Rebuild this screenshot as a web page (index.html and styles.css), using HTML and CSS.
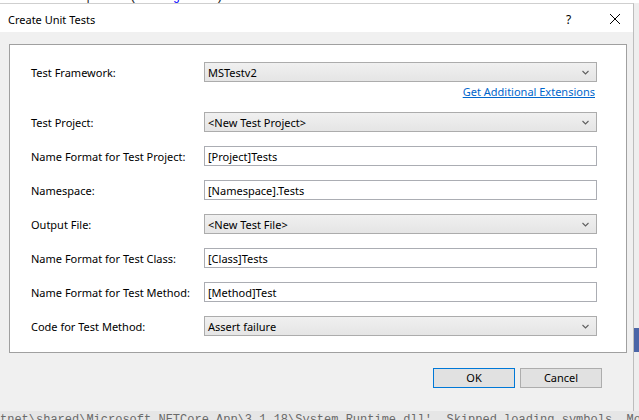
FILE: index.html
```html
<!DOCTYPE html>
<html>
<head>
<meta charset="utf-8">
<link rel="stylesheet" href="styles.css">
</head>
<body>
<div class="desktop">
  <div class="code code-top"><span class="b">*</span><span class="k"> ConsoleOutputFor(</span><span class="b">string</span><span class="k"> name)</span></div>
  <div class="code code-bottom">tnet\shared\Microsoft.NETCore.App\3.1.18\System.Runtime.dll'. Skipped loading symbols. Module</div>
  <div class="side-strip"><div class="side-blue"></div></div>

  <div class="dialog">
    <div class="titlebar">
      <span class="title">Create Unit Tests</span>
      <span class="help">?</span>
      <svg class="close" width="12" height="12" viewBox="0 0 12 12"><path d="M1 1 L11 11 M11 1 L1 11" stroke="#000" stroke-width="1" fill="none"/></svg>
    </div>
    <div class="body">
      <div class="panel">
        <div class="row first">
          <span class="label">Test Framework:</span>
          <div class="select"><span>MSTestv2</span><svg class="chev" width="7" height="5" viewBox="0 0 7 5"><path d="M0.5 1 L3.5 4 L6.5 1" stroke="#606060" stroke-width="1.1" fill="none"/></svg></div>
        </div>
        <div class="linkrow"><a class="link">Get Additional Extensions</a></div>
        <div class="row after-link">
          <span class="label">Test Project:</span>
          <div class="select"><span>&lt;New Test Project&gt;</span><svg class="chev" width="7" height="5" viewBox="0 0 7 5"><path d="M0.5 1 L3.5 4 L6.5 1" stroke="#606060" stroke-width="1.1" fill="none"/></svg></div>
        </div>
        <div class="row">
          <span class="label">Name Format for Test Project:</span>
          <div class="textbox">[Project]Tests</div>
        </div>
        <div class="row">
          <span class="label">Namespace:</span>
          <div class="textbox">[Namespace].Tests</div>
        </div>
        <div class="row">
          <span class="label">Output File:</span>
          <div class="select"><span>&lt;New Test File&gt;</span><svg class="chev" width="7" height="5" viewBox="0 0 7 5"><path d="M0.5 1 L3.5 4 L6.5 1" stroke="#606060" stroke-width="1.1" fill="none"/></svg></div>
        </div>
        <div class="row">
          <span class="label">Name Format for Test Class:</span>
          <div class="textbox">[Class]Tests</div>
        </div>
        <div class="row">
          <span class="label">Name Format for Test Method:</span>
          <div class="textbox">[Method]Test</div>
        </div>
        <div class="row">
          <span class="label">Code for Test Method:</span>
          <div class="select"><span>Assert failure</span><svg class="chev" width="7" height="5" viewBox="0 0 7 5"><path d="M0.5 1 L3.5 4 L6.5 1" stroke="#606060" stroke-width="1.1" fill="none"/></svg></div>
        </div>
      </div>
      <div class="buttons">
        <button class="btn default">OK</button>
        <button class="btn">Cancel</button>
      </div>
    </div>
  </div>
</div>
</body>
</html>
```
FILE: styles.css
```css
html, body {
  margin: 0;
  padding: 0;
  background: #ffffff;
}
.desktop {
  position: relative;
  width: 639px;
  height: 420px;
  overflow: hidden;
  background: #ffffff;
  font-family: "Noto Sans", "Open Sans", sans-serif;
}
.code {
  position: absolute;
  left: 0;
  font-family: "Liberation Mono", monospace;
  font-size: 12px;
  line-height: 14px;
  white-space: pre;
}
.code-top {
  top: -10px;
  color: #1e1e1e;
}
.code-top .b { color: #0000ff; }
.code-bottom {
  top: 411px;
  width: 639px;
  height: 14px;
  background: #e6e6e6;
  color: #6a6a6a;
  padding-top: 2px;
}
.side-strip {
  position: absolute;
  left: 634px;
  top: 3px;
  width: 5px;
  height: 408px;
  background: #eeeeee;
}
.side-blue {
  margin-top: 325px;
  height: 24px;
  background: #4b66a8;
}
.dialog {
  position: absolute;
  left: 0;
  top: 3px;
  width: 633px;
  height: 407px;
  border-top: 1px solid #cfcfcf;
  border-right: 1px solid #bdbdbd;
  background: #f0f0f0;
  display: flex;
  flex-direction: column;
}
.titlebar {
  height: 28px;
  background: #ffffff;
  display: flex;
  align-items: center;
  position: relative;
  font-size: 11px;
  color: #000;
}
.title {
  margin-left: 8px;
  margin-top: 2px;
}
.help {
  position: absolute;
  left: 566px;
  top: 7px;
  font-size: 12px;
}
.close {
  position: absolute;
  left: 609px;
  top: 9px;
}
.body {
  flex: 1;
  padding: 12px 6px 0 9px;
  display: flex;
  flex-direction: column;
}
.panel {
  background: #ffffff;
  border: 1px solid #a0a0a0;
  height: 307px;
  padding: 0 29px 0 21px;
  display: flex;
  flex-direction: column;
}
.row {
  display: flex;
  align-items: center;
  height: 20px;
  margin-top: 14px;
  font-size: 11px;
  color: #000;
}
.row.first { margin-top: 17px; }
.row.after-link { margin-top: 12px; }
.label {
  width: 173px;
  flex: none;
  white-space: nowrap;
}
.select, .textbox {
  flex: 1;
  height: 20px;
  box-sizing: border-box;
  display: flex;
  align-items: center;
  padding-left: 3px;
  font-size: 11px;
}
.select {
  border: 1px solid #acacac;
  background: linear-gradient(#f0f0f0, #e5e5e5);
  justify-content: space-between;
}
.chev {
  margin-right: 7px;
}
.textbox {
  border: 1px solid #abadb3;
  background: #ffffff;
}
.linkrow {
  display: flex;
  justify-content: flex-end;
  height: 16px;
  margin-top: 2px;
  padding-right: 2px;
  font-size: 11px;
  line-height: 16px;
}
.link {
  color: #0066cc;
  text-decoration: underline;
}
.buttons {
  display: flex;
  justify-content: flex-end;
  gap: 5px;
  margin-top: 15px;
  padding-right: 25px;
}
.btn {
  width: 82px;
  height: 20px;
  box-sizing: border-box;
  border: 1px solid #adadad;
  background: #e1e1e1;
  font-family: "Noto Sans", "Open Sans", sans-serif;
  font-size: 11px;
  color: #000;
  padding: 0;
  line-height: 16px;
}
.btn.default {
  border: 1px solid #0078d7;
}
```
